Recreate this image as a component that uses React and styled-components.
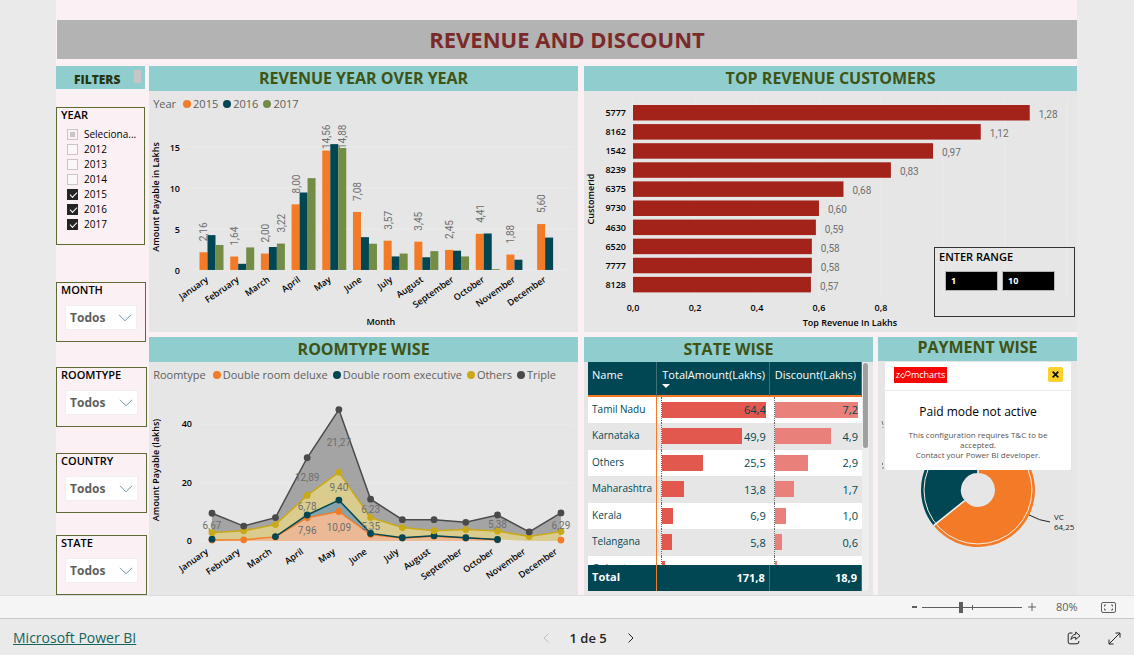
import React from "react";
import styled, { createGlobalStyle } from "styled-components";

const GlobalStyle = createGlobalStyle`
  *, *::before, *::after { box-sizing: border-box; }
  body {
    margin: 0;
    background: #eaeaea;
    font-family: "Open Sans", "Noto Sans", sans-serif;
    color: #252423;
  }
  button, input, select { font-family: inherit; }
`;

const ORANGE = "#f37b27";
const TEAL = "#004753";
const GREEN = "#738c46";
const GOLD = "#c9a916";
const GRAPHITE = "#4a4a4b";

const MONTHS = ["January", "February", "March", "April", "May", "June", "July", "August", "September", "October", "November", "December"];

/* ---------- Page frame ---------- */

const Page = styled.div`
  display: flex;
  flex-direction: column;
  min-height: 100vh;
`;

const Canvas = styled.main`
  flex: 1;
  margin: 0 57px 0 56px;
  padding-top: 20px;
  background: #fbf1f5;
`;

const Banner = styled.h1`
  margin: 0 0 7px 1px;
  background: #b3b3b3;
  color: #7b2a2a;
  font-size: 22px;
  line-height: 39px;
  font-weight: 700;
  text-align: center;
`;

const Board = styled.div`
  display: flex;
  gap: 2px;
`;

const Sidebar = styled.aside`
  flex: 0 0 91px;
  display: flex;
  flex-direction: column;
`;

const Panels = styled.div`
  flex: 1;
  min-width: 0;
  display: grid;
  grid-template-columns: minmax(0, 429fr) minmax(0, 493fr);
  gap: 5px 6px;
`;

const SplitPanels = styled.div`
  display: grid;
  grid-template-columns: minmax(0, 289fr) minmax(0, 199fr);
  gap: 5px;
`;

const Panel = styled.section`
  position: relative;
  display: flex;
  flex-direction: column;
  background: #e6e6e6;
`;

const PanelTitle = styled.h2`
  margin: 0;
  background: #90cdcf;
  color: #3e5314;
  font-size: 16px;
  line-height: ${(p) => (p.$compact ? 20 : 24)}px;
  height: ${(p) => (p.$compact ? 24 : 25)}px;
  font-weight: 700;
  text-align: center;
`;

/* ---------- Filters ---------- */

const FiltersHeading = styled.h2`
  display: flex;
  align-items: flex-start;
  justify-content: space-between;
  height: 23px;
  margin: 0 2px 18px 0;
  padding: 4px 4px 0 18px;
  background: #90cdcf;
  color: #26370f;
  font-size: 12px;
  line-height: 19px;
  font-weight: 800;
`;

const ScrollStub = styled.span`
  width: 7px;
  height: 13px;
  background: #c6c6c6;
`;

const FilterCard = styled.fieldset`
  min-width: 0;
  height: ${(p) => p.$height || 60}px;
  margin: 0 ${(p) => p.$inset || 0}px ${(p) => p.$after || 0}px 0;
  padding: 0 8px 0 4px;
  border: 1px solid #5c6b35;
`;

const FilterName = styled.label`
  display: block;
  color: #000;
  font-size: 11px;
  line-height: 13px;
  font-weight: 600;
`;

const Options = styled.ul`
  list-style: none;
  margin: 6px 0 0;
  padding: 0 0 0 6px;
`;

const Option = styled.label`
  display: flex;
  align-items: center;
  gap: 6px;
  height: 15px;
  font-size: 10px;
  line-height: 15px;
  white-space: nowrap;
  color: #000;
`;

const Tick = styled.input`
  appearance: none;
  flex: none;
  width: 11px;
  height: 11px;
  margin: 0;
  border: 1px solid #c8c6c8;
  background: ${(p) => (p.$partial ? "#c8c6c4 content-box" : "#fdf6f9")};
  padding: 2px;
  display: grid;
  place-items: center;
  &:checked {
    border-color: #252423;
    background: #252423;
  }
  &:checked::after {
    content: "";
    width: 7px;
    height: 4px;
    margin-bottom: 2px;
    border-left: 1px solid #fff;
    border-bottom: 1px solid #fff;
    transform: rotate(-45deg);
  }
`;

const SelectFrame = styled.div`
  display: flex;
  align-items: center;
  height: 25px;
  margin: 9px 0 0 4px;
  border: 1px solid #f2eef0;
  background: #fff;
`;

const Select = styled.select`
  appearance: none;
  flex: 1;
  min-width: 0;
  height: 23px;
  padding: 0 0 0 4px;
  border: 0;
  background: transparent;
  color: #605e5c;
  font-size: 12px;
  font-weight: 700;
`;

const Chevron = styled.svg`
  flex: none;
  width: 14px;
  height: 8px;
  margin-right: 4px;
  fill: none;
  stroke: #6f95a8;
`;

function DropFilter({ name, after, inset }) {
  const id = `filter-${name}`;
  return (
    <FilterCard $after={after} $inset={inset}>
      <FilterName htmlFor={id}>{name}</FilterName>
      <SelectFrame>
        <Select id={id}>
          <option>Todos</option>
        </Select>
        <Chevron viewBox="0 0 14 8"><path d="M1 .8 7 6.8 13 .8" /></Chevron>
      </SelectFrame>
    </FilterCard>
  );
}

const YEARS = [
  { label: "Seleciona...", partial: true },
  { label: "2012" },
  { label: "2013" },
  { label: "2014" },
  { label: "2015", on: true },
  { label: "2016", on: true },
  { label: "2017", on: true },
];

/* ---------- Charts ---------- */

const Legend = styled.div`
  display: flex;
  align-items: center;
  gap: 5px;
  height: ${(p) => p.$height || 25}px;
  padding-left: 4px;
  color: #605e5c;
  font-size: 11px;
  line-height: 16px;
  white-space: nowrap;
`;

const LegendItem = styled.span`
  display: flex;
  align-items: center;
  gap: 2px;
  &::before {
    content: "";
    width: 8px;
    height: 8px;
    border-radius: 50%;
    background: ${(p) => p.$color};
  }
`;

const LegendTitle = styled.span`
  margin-right: 2px;
`;

const Plot = styled.svg`
  display: block;
  width: 100%;
  height: auto;
`;

const AxisText = styled.text`
  font-size: 9px;
  font-weight: 600;
  fill: #000;
`;

const DataLabel = styled.text`
  font-family: Roboto, sans-serif;
  font-size: 10px;
  fill: #6e6e6e;
`;

const GridLine = styled.line`
  stroke: #ebebeb;
  stroke-width: 1;
`;

const comma = (n, d = 2) => n.toFixed(d).replace(".", ",");

const REVENUE = [
  { color: ORANGE, values: [2.16, 1.64, 2, 8, 14.56, 7.08, 3.57, 3.45, 2.45, 4.41, 1.88, 5.6], labelled: MONTHS.map((_, i) => i) },
  { color: TEAL, values: [4.25, 0.75, 2.8, 9.45, 15.35, 4, 1.65, 1.55, 2.35, 4.45, 1.25, 3.95], labelled: [] },
  { color: GREEN, values: [3.05, 2.75, 3.22, 11.2, 14.88, 3.2, 2, 2.3, 1.65, 0.1, 0, 0], labelled: [2, 4] },
];

function MonthAxis({ first, pitch, y }) {
  return MONTHS.map((m, i) => {
    const x = first + i * pitch;
    return <AxisText key={m} x={x} y={y} textAnchor="end" transform={`rotate(-35 ${x} ${y})`}>{m}</AxisText>;
  });
}

function RevenueChart() {
  const base = 154;
  const unit = 8.2;
  const bars = [];
  const labels = [];
  REVENUE.forEach((s, k) =>
    s.values.forEach((v, i) => {
      const x = 50.5 + i * 30.7 + k * 8;
      const top = base - v * unit;
      bars.push(<rect key={`${k}-${i}`} x={x} y={top} width="8" height={v * unit} fill={s.color} />);
      if (s.labelled.includes(i)) {
        const y = Math.max(top - 11, 33);
        labels.push(<DataLabel key={`${k}-${i}`} x={x + 8} y={y} transform={`rotate(-90 ${x + 8} ${y})`}>{comma(v)}</DataLabel>);
      }
    })
  );
  return (
    <Plot viewBox="0 0 429 216" role="img" aria-label="Revenue year over year">
      {[0, 5, 10, 15].map((t) => (
        <g key={t}>
          <GridLine x1="38" x2="425" y1={base - t * unit} y2={base - t * unit} />
          <AxisText x="31" y={base - t * unit + 4} textAnchor="end">{t}</AxisText>
        </g>
      ))}
      {labels}
      {bars}
      <MonthAxis first={60} pitch={30.7} y={165} />
      <AxisText x="232" y="209" textAnchor="middle">Month</AxisText>
      <AxisText x="10" y="81" textAnchor="middle" transform="rotate(-90 10 81)">Amount Payable in Lakhs</AxisText>
    </Plot>
  );
}

const CUSTOMERS = [
  ["5777", 1.28], ["8162", 1.122], ["1542", 0.968], ["8239", 0.832], ["6375", 0.679],
  ["9730", 0.6], ["4630", 0.59], ["6520", 0.577], ["7777", 0.577], ["8128", 0.574],
];

function CustomerChart() {
  const left = 49;
  const unit = 310;
  return (
    <Plot viewBox="0 0 493 241" role="img" aria-label="Top revenue customers">
      {[0, 0.2, 0.4, 0.6, 0.8, 1, 1.2, 1.4].map((t) => (
        <g key={t}>
          <GridLine x1={left + t * unit} x2={left + t * unit} y1="8" y2="206" />
          {t < 0.9 && <AxisText x={left + t * unit} y="220" textAnchor="middle">{comma(t, 1)}</AxisText>}
        </g>
      ))}
      {CUSTOMERS.map(([id, v], i) => {
        const y = 14 + i * 19.1;
        return (
          <g key={id}>
            <AxisText x="42" y={y + 11} textAnchor="end">{id}</AxisText>
            <rect x={left} y={y} width={v * unit} height="15.5" fill="#a3221a" />
            <DataLabel x={left + v * unit + 9} y={y + 13}>{comma(v)}</DataLabel>
          </g>
        );
      })}
      <AxisText x="266" y="235" textAnchor="middle">Top Revenue In Lakhs</AxisText>
      <AxisText x="10" y="108" textAnchor="middle" transform="rotate(-90 10 108)">CustomerId</AxisText>
    </Plot>
  );
}

const ROOM_TOPS = {
  deluxe: [0.3, 0.4, 1.4, 7.96, 10.09, 2.2, 1, 1.6, 1, 0.4],
  executive: [1.5, 8.9, 14, 2.6, 1.1, 1.8, 1.1, 0.5],
  others: [2.85, 3.5, 5.6, 15.6, 23.5, 8, 4.6, 3.5, 3.9, 3.4, 1.5, 3.2],
  triple: [9.5, 5.1, 8, 28.5, 45, 14.3, 7.3, 7.3, 6.4, 8.9, 3.1, 9.6],
};

const ROOM_LABELS = [
  [0, 141, "6,67"], [3, 93, "12,89"], [3, 122, "6,78"], [3, 146, "7,96"], [4, 58, "21,27"], [4, 103, "9,40"],
  [4, 143, "10,09"], [5, 125, "6,23"], [5, 142, "5,35"], [9, 140, "5,38"], [11, 141, "6,29"],
];

function RoomChart() {
  const base = 153;
  const px = (i) => 63 + i * 31.73;
  const py = (v) => base - v * 2.92;
  const points = (vals, from = 0) => vals.map((v, i) => [px(i + from), py(v)]);
  const deluxe = points(ROOM_TOPS.deluxe);
  const executive = points(ROOM_TOPS.executive, 2);
  const others = points(ROOM_TOPS.others);
  const triple = points(ROOM_TOPS.triple);
  const floor = [[px(0), base], [px(9), base]];
  const stackTop = [...deluxe.slice(0, 2), ...executive, [px(10), base], [px(11), base]];
  const band = (top, bottom) => [...top, ...[...bottom].reverse()].map((p) => p.join(",")).join(" ");
  const line = (pts) => pts.map((p) => p.join(",")).join(" ");
  const layers = [
    { color: ORANGE, line: deluxe, dots: [...deluxe, [px(11), py(0.3)]], area: band(deluxe, floor) },
    { color: TEAL, line: executive, dots: [[px(0), py(0.6)], ...executive], area: band(executive, deluxe.slice(2)) },
    { color: GOLD, line: others, dots: others, area: band(others, stackTop) },
    { color: GRAPHITE, line: triple, dots: triple, area: band(triple, others) },
  ];
  return (
    <Plot viewBox="0 0 429 207" role="img" aria-label="Revenue by room type">
      {[0, 20, 40].map((t) => (
        <g key={t}>
          <GridLine x1="50" x2="425" y1={py(t)} y2={py(t)} />
          <AxisText x="43" y={py(t) + 3} textAnchor="end">{t}</AxisText>
        </g>
      ))}
      {layers.map((l) => <polygon key={l.color} points={l.area} fill={l.color} fillOpacity="0.42" />)}
      {layers.map((l) => (
        <g key={l.color}>
          <polyline points={line(l.line)} fill="none" stroke={l.color} strokeWidth="1.5" />
          {l.dots.map(([x, y]) => <circle key={x} cx={x} cy={y} r="3.4" fill={l.color} />)}
        </g>
      ))}
      {ROOM_LABELS.map(([i, y, t]) => <DataLabel key={t} x={px(i)} y={y} textAnchor="middle">{t}</DataLabel>)}
      <MonthAxis first={60} pitch={31.73} y={165} />
      <AxisText x="10" y="82" textAnchor="middle" transform="rotate(-90 10 82)">Amount Payable (lakhs)</AxisText>
    </Plot>
  );
}

/* ---------- Enter range ---------- */

const RangeBox = styled.fieldset`
  position: absolute;
  right: 2px;
  bottom: 15px;
  width: 141px;
  height: 70px;
  margin: 0;
  padding: 0 4px;
  border: 1px solid #333;
`;

const RangeTitle = styled.div`
  color: #000;
  font-size: 11px;
  line-height: 18px;
  font-weight: 600;
`;

const RangeInputs = styled.div`
  display: flex;
  gap: 4px;
  padding: 5px 0 0 6px;
`;

const RangeInput = styled.input`
  width: 53px;
  height: 20px;
  padding: 0 5px;
  border: 1px solid #b5b5b5;
  background: #000;
  color: #fff;
  font-size: 9px;
  font-weight: 700;
`;

/* ---------- State table ---------- */

const TableFrame = styled.div`
  display: flex;
  height: 229px;
  padding: 0 4px;
  margin-bottom: 4px;
`;

const Table = styled.table`
  flex: 1;
  min-width: 0;
  display: flex;
  flex-direction: column;
  color: ${TEAL};
  font-size: 11px;
`;

const TableBody = styled.tbody`
  display: block;
  flex: 1;
  min-height: 0;
  overflow: hidden;
`;

const TableSection = styled.thead`
  display: block;
`;

const Row = styled.tr`
  display: grid;
  grid-template-columns: minmax(0, 69fr) minmax(0, 112fr) minmax(0, 92fr);
`;

const HeadCell = styled.th`
  height: 35px;
  padding: 5px 0 0 ${(p) => (p.$first ? 4 : 5)}px;
  border-bottom: 2px solid ${ORANGE};
  border-right: 1px solid #3d7079;
  background: ${TEAL};
  color: #fff;
  font-size: 11px;
  line-height: 16px;
  font-weight: 400;
  text-align: left;
  white-space: nowrap;
`;

const SortMark = styled.span`
  display: block;
  width: 0;
  margin-top: 1px;
  border: 4px solid transparent;
  border-top-color: #fff;
  border-bottom: 0;
`;

const StateRow = styled(Row)`
  height: 26px;
  background: #fff;
  &:nth-child(even) {
    height: 27px;
    background: #e6e6e6;
  }
`;

const NameCell = styled.th`
  padding: 4px 0 0 4px;
  border-right: 1px solid ${ORANGE};
  font-size: 10px;
  line-height: 16px;
  font-weight: 400;
  text-align: left;
  white-space: nowrap;
`;

const ValueCell = styled.td`
  padding: 0 4px;
`;

const BarBox = styled.div`
  display: grid;
  align-items: center;
  border-left: 1px dotted #666;
  height: 100%;
`;

const Bar = styled.span`
  grid-area: 1 / 1;
  height: 16px;
  background: ${(p) => p.$color};
`;

const BarValue = styled.span`
  grid-area: 1 / 1;
  text-align: right;
`;

const TotalCell = styled.td`
  height: 26px;
  padding: ${(p) => (p.$first ? 0 : 1)}px 4px 0;
  border-right: 1px solid ${(p) => (p.$first ? ORANGE : "#3d7079")};
  background: ${TEAL};
  color: #fff;
  font-size: 11px;
  line-height: 24px;
  font-weight: 700;
  text-align: ${(p) => (p.$first ? "left" : "right")};
`;

const ScrollTrack = styled.div`
  width: 7px;
  padding: 1px 0 0 1px;
  border-radius: 3px;
  background: #eeeeee;
`;

const ScrollThumb = styled.div`
  width: 5px;
  height: 85px;
  border-radius: 3px;
  background: #a19f9d;
`;

const STATES = [
  ["Tamil Nadu", 64.4, 7.2], ["Karnataka", 49.9, 4.9], ["Others", 25.5, 2.9], ["Maharashtra", 13.8, 1.7],
  ["Kerala", 6.9, 1.0], ["Telangana", 5.8, 0.6], ["Gujarat", 1.5, 0.2],
];

function DataBar({ value, max, color }) {
  return (
    <ValueCell>
      <BarBox>
        <Bar $color={color} style={{ width: `${(value / max) * 100}%` }} />
        <BarValue>{comma(value, 1)}</BarValue>
      </BarBox>
    </ValueCell>
  );
}

function StateTable() {
  return (
    <TableFrame>
      <Table>
        <TableSection>
          <Row>
            <HeadCell $first>Name</HeadCell>
            <HeadCell>TotalAmount(Lakhs)<SortMark /></HeadCell>
            <HeadCell>Discount(Lakhs)</HeadCell>
          </Row>
        </TableSection>
        <TableBody>
          {STATES.map(([name, total, discount]) => (
            <StateRow key={name}>
              <NameCell scope="row">{name}</NameCell>
              <DataBar value={total} max={64.4} color="#e2574e" />
              <DataBar value={discount} max={7.2} color="#e9807a" />
            </StateRow>
          ))}
        </TableBody>
        <TableSection as="tfoot">
          <Row>
            <TotalCell $first>Total</TotalCell>
            <TotalCell>171,8</TotalCell>
            <TotalCell>18,9</TotalCell>
          </Row>
        </TableSection>
      </Table>
      <ScrollTrack><ScrollThumb /></ScrollTrack>
    </TableFrame>
  );
}

/* ---------- Payment ---------- */

const Notice = styled.div`
  position: absolute;
  top: 25px;
  left: 7px;
  right: 6px;
  height: 108px;
  border-radius: 2px;
  background: #fff;
  text-align: center;
`;

const NoticeBar = styled.div`
  display: flex;
  align-items: flex-start;
  justify-content: space-between;
  height: 29px;
  padding: 5px 8px 0 9px;
  border-bottom: 1px solid #ebebeb;
`;

const Brand = styled.div`
  display: flex;
  align-items: center;
  justify-content: center;
  width: 53px;
  height: 16px;
  background: #f80606;
  color: #fff;
  font-size: 9px;
  line-height: 14px;
`;

const CloseButton = styled.button`
  display: grid;
  place-items: center;
  width: 15px;
  height: 15px;
  padding: 0;
  border: 0;
  border-radius: 2px;
  background: #fad02c;
`;

const NoticeTitle = styled.h3`
  margin: 12px 0 9px;
  color: #000;
  font-size: 12px;
  line-height: 18px;
  font-weight: 500;
`;

const NoticeText = styled.p`
  margin: 0 12px;
  color: #555;
  font-size: 8px;
  line-height: 10px;
`;

const CalloutText = styled.text`
  font-size: 8px;
  fill: #222;
`;

function PaymentChart() {
  const cx = 100;
  const cy = 129;
  const at = (r, share) => {
    const a = share * 2 * Math.PI;
    return [cx + r * Math.sin(a), cy - r * Math.cos(a)].map((n) => n.toFixed(2)).join(" ");
  };
  const cut = 0.6425;
  return (
    <Plot viewBox="0 0 199 234" role="img" aria-label="Payment wise">
      <path d={`M${at(57, 0)} A57 57 0 1 1 ${at(57, cut)} L${at(17, cut)} A17 17 0 1 0 ${at(17, 0)}Z`} fill={ORANGE} />
      <path d={`M${at(57, cut)} A57 57 0 0 1 ${at(57, 0)} L${at(17, 0)} A17 17 0 0 0 ${at(17, cut)}Z`} fill={TEAL} />
      <circle cx={cx} cy={cy} r="54" fill="none" stroke="#f5ece6" />
      <path d={`M${at(17, 0)} L${at(57, 0)} M${at(17, cut)} L${at(57, cut)}`} stroke="#efefef" strokeWidth="1.6" />
      <path d="M151 154q11 6 21 7" fill="none" stroke="#222" />
      <path d="M4 60l1 4M5 66v1M4.500 102v2M5 106v2" fill="none" stroke="#777" />
      <CalloutText x="176" y="159">VC</CalloutText>
      <CalloutText x="176" y="169">64,25</CalloutText>
    </Plot>
  );
}

/* ---------- Bottom bars ---------- */

const ZoomBar = styled.div`
  display: flex;
  align-items: center;
  justify-content: flex-end;
  height: 24px;
  padding-right: 18px;
  border-top: 1px solid #dedede;
  border-bottom: 1px solid #c8c8c8;
  background: #f5f5f5;
  color: #605e5c;
`;

const IconButton = styled.button`
  display: grid;
  place-items: center;
  width: ${(p) => p.$width || 16}px;
  height: 22px;
  padding: 0;
  border: 0;
  background: transparent;
  color: ${(p) => (p.$muted ? "#c0bebc" : "inherit")};
  svg { display: block; fill: none; stroke: currentColor; }
`;

const ZoomSlider = styled.input`
  appearance: none;
  width: 100px;
  height: 16px;
  margin: 0 2px 0 0;
  background:
    linear-gradient(#605e5c, #605e5c) 50px 50% / 1px 5px no-repeat,
    linear-gradient(#605e5c, #605e5c) 0 50% / 100% 1px no-repeat;
  &::-webkit-slider-thumb {
    appearance: none;
    width: 4px;
    height: 11px;
    background: #605e5c;
  }
`;

const ZoomValue = styled.output`
  width: 23px;
  margin: 0 21px 0 16px;
  font-size: 11px;
  line-height: 20px;
`;

const Footer = styled.footer`
  display: flex;
  align-items: center;
  justify-content: space-between;
  height: 36px;
  padding: 2px 6px 0 13px;
`;

const BrandLink = styled.a`
  color: #14645c;
  font-size: 14px;
  line-height: 20px;
`;

const Pager = styled.nav`
  display: flex;
  align-items: center;
  gap: 16px;
  font-size: 13px;
  font-weight: 600;
`;

const Actions = styled.div`
  display: flex;
  gap: 12px;
  padding-left: 20px;
`;

export default function App() {
  return (
    <Page>
      <GlobalStyle />
      <Canvas>
        <Banner>REVENUE AND DISCOUNT</Banner>
        <Board>
          <Sidebar>
            <FiltersHeading>FILTERS<ScrollStub /></FiltersHeading>
            <FilterCard $height={138} $inset={2} $after={37} aria-label="Year">
              <FilterName as="div">YEAR</FilterName>
              <Options>
                {YEARS.map((y) => (
                  <li key={y.label}>
                    <Option>
                      <Tick type="checkbox" defaultChecked={y.on} $partial={y.partial} />
                      {y.label}
                    </Option>
                  </li>
                ))}
              </Options>
            </FilterCard>
            <DropFilter name="MONTH" after={25} inset={1} />
            <DropFilter name="ROOMTYPE" after={26} />
            <DropFilter name="COUNTRY" after={22} />
            <DropFilter name="STATE" />
          </Sidebar>
          <Panels>
            <Panel>
              <PanelTitle>REVENUE YEAR OVER YEAR</PanelTitle>
              <Legend>
                <LegendTitle>Year</LegendTitle>
                <LegendItem $color={ORANGE}>2015</LegendItem>
                <LegendItem $color={TEAL}>2016</LegendItem>
                <LegendItem $color={GREEN}>2017</LegendItem>
              </Legend>
              <RevenueChart />
            </Panel>
            <Panel>
              <PanelTitle>TOP REVENUE CUSTOMERS</PanelTitle>
              <CustomerChart />
              <RangeBox>
                <RangeTitle>ENTER RANGE</RangeTitle>
                <RangeInputs>
                  <RangeInput aria-label="Range start" defaultValue="1" />
                  <RangeInput aria-label="Range end" defaultValue="10" />
                </RangeInputs>
              </RangeBox>
            </Panel>
            <Panel>
              <PanelTitle>ROOMTYPE WISE</PanelTitle>
              <Legend $height={26}>
                <LegendTitle>Roomtype</LegendTitle>
                <LegendItem $color={ORANGE}>Double room deluxe</LegendItem>
                <LegendItem $color={TEAL}>Double room executive</LegendItem>
                <LegendItem $color={GOLD}>Others</LegendItem>
                <LegendItem $color={GRAPHITE}>Triple</LegendItem>
              </Legend>
              <RoomChart />
            </Panel>
            <SplitPanels>
              <Panel>
                <PanelTitle>STATE WISE</PanelTitle>
                <StateTable />
              </Panel>
              <Panel>
                <PanelTitle $compact>PAYMENT WISE</PanelTitle>
                <PaymentChart />
                <Notice role="dialog" aria-label="Paid mode not active">
                  <NoticeBar>
                    <Brand>
                      z
                      <svg width="11" height="9" viewBox="0 0 11 9" fill="none" stroke="#fff">
                        <path d="M3.800 4A2 2 0 1 0 4.600 6.600L5.600 3.500A2.300 2.300 0 1 1 8.300 5.800L6.600 5.400" />
                      </svg>
                      mcharts
                    </Brand>
                    <CloseButton aria-label="Close">
                      <svg width="7" height="7" viewBox="0 0 7 7" stroke="#111" strokeWidth="1.800"><path d="M.7.7l5.600 5.600M6.300.7.7 6.300" /></svg>
                    </CloseButton>
                  </NoticeBar>
                  <NoticeTitle>Paid mode not active</NoticeTitle>
                  <NoticeText>This configuration requires T&amp;C to be accepted.<br />Contact your Power BI developer.</NoticeText>
                </Notice>
              </Panel>
            </SplitPanels>
          </Panels>
        </Board>
      </Canvas>
      <ZoomBar>
        <IconButton aria-label="Zoom out"><svg width="5" height="2"><path d="M0 1h5" strokeWidth="2" /></svg></IconButton>
        <ZoomSlider type="range" aria-label="Zoom" min="0" max="100" defaultValue="39" />
        <IconButton aria-label="Zoom in"><svg width="8" height="8" viewBox="0 0 8 8"><path d="M0 4h8M4 0v8" /></svg></IconButton>
        <ZoomValue>80%</ZoomValue>
        <IconButton aria-label="Fit to page">
          <svg width="15" height="11" viewBox="0 0 15 11">
            <rect x=".5" y=".5" width="14" height="10" rx="1.500" />
            <path d="M5 3H3.500v1.500M3.500 6.500V8H5M10 3h1.500v1.500M11.500 6.500V8H10" />
          </svg>
        </IconButton>
      </ZoomBar>
      <Footer>
        <BrandLink href="#powerbi">Microsoft Power BI</BrandLink>
        <Pager aria-label="Pages">
          <IconButton $muted aria-label="Previous page"><svg width="6" height="10" viewBox="0 0 6 10"><path d="M5.500.5 1 5l4.500 4.500" /></svg></IconButton>
          <span>1 de 5</span>
          <IconButton aria-label="Next page"><svg width="6" height="10" viewBox="0 0 6 10"><path d="M.5.5 5 5 .5 9.500" /></svg></IconButton>
        </Pager>
        <Actions>
          <IconButton $width={28} aria-label="Share">
            <svg width="14" height="14" viewBox="0 0 14 14">
              <path d="M5.500 2H3A1.800 1.800 0 0 0 1.200 3.800V11A1.800 1.800 0 0 0 3 12.800h7A1.800 1.800 0 0 0 11.800 11v-1" />
              <path d="M8.700 1 13 4.800 8.700 8.500V6.300C6.500 6.200 5 7 4 8.500 4.200 5.500 6 3.500 8.700 3.300z" strokeLinejoin="round" />
            </svg>
          </IconButton>
          <IconButton $width={28} aria-label="Full screen">
            <svg width="13" height="13" viewBox="0 0 13 13"><path d="M7.500 1H12v4.500M12 1 1 12M1 7.500V12h4.500" /></svg>
          </IconButton>
        </Actions>
      </Footer>
    </Page>
  );
}
